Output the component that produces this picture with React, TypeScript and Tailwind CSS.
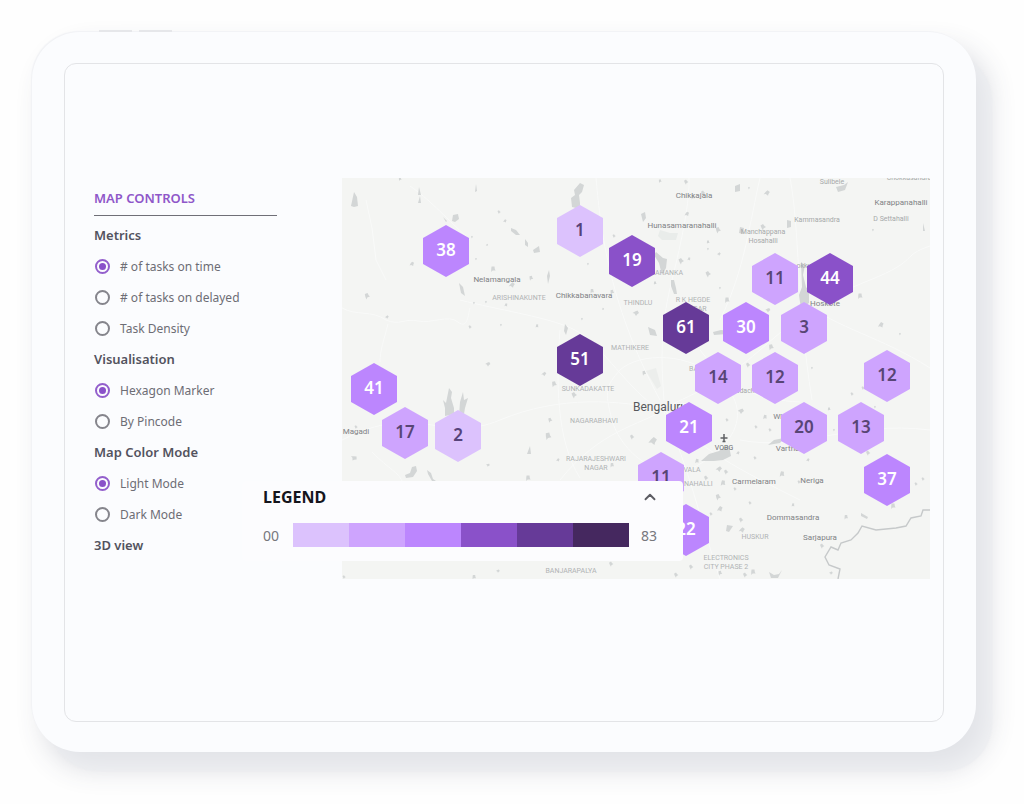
import React, { useState } from 'react';
import { ChevronUp } from 'lucide-react';

// Visible window of the map, in map units
const VIEW = { x: 342, y: 178, w: 588, h: 401 };

const place = (x: number, y: number): React.CSSProperties => ({
  left: `${((x - VIEW.x) / VIEW.w) * 100}%`,
  top: `${((y - VIEW.y) / VIEW.h) * 100}%`,
});

const LEVELS = {
  1: 'bg-[#dcc2fd] text-[#56437a]',
  2: 'bg-[#cea4fe] text-[#584575]',
  3: 'bg-[#bc86fe] text-white',
  4: 'bg-[#8a51c9] text-white',
  5: 'bg-[#663a98] text-white',
};

type Level = keyof typeof LEVELS;

const MARKERS: { x: number; y: number; count: number; level: Level }[] = [
  { x: 446, y: 251, count: 38, level: 3 },
  { x: 580, y: 231, count: 1, level: 1 },
  { x: 632, y: 261, count: 19, level: 4 },
  { x: 775, y: 279, count: 11, level: 2 },
  { x: 830, y: 279, count: 44, level: 4 },
  { x: 686, y: 328, count: 61, level: 5 },
  { x: 746, y: 328, count: 30, level: 3 },
  { x: 804, y: 328, count: 3, level: 2 },
  { x: 580, y: 360, count: 51, level: 5 },
  { x: 718, y: 378, count: 14, level: 2 },
  { x: 775, y: 378, count: 12, level: 2 },
  { x: 887, y: 376, count: 12, level: 2 },
  { x: 374, y: 389, count: 41, level: 3 },
  { x: 405, y: 433, count: 17, level: 2 },
  { x: 458, y: 436, count: 2, level: 1 },
  { x: 689, y: 428, count: 21, level: 3 },
  { x: 804, y: 428, count: 20, level: 2 },
  { x: 861, y: 428, count: 13, level: 2 },
  { x: 661, y: 478, count: 11, level: 2 },
  { x: 887, y: 480, count: 37, level: 3 },
  { x: 686, y: 530, count: 22, level: 3 },
];

const TOWN = 'text-[8px] text-[#7f8285]';
const VILLAGE = 'text-[7px] text-[#a6a9aa]';
const AREA = 'text-[7px] text-[#b0b3b4]';

const LABELS: { x: number; y: number; text: string; style: string }[] = [
  { x: 497, y: 280, text: 'Nelamangala', style: TOWN },
  { x: 519, y: 298, text: 'ARISHINAKUNTE', style: AREA },
  { x: 694, y: 196, text: 'Chikkajala', style: TOWN },
  { x: 682, y: 226, text: 'Hunasamaranahalli', style: TOWN },
  { x: 663, y: 273, text: 'YELAHANKA', style: AREA },
  { x: 584, y: 296, text: 'Chikkabanavara', style: TOWN },
  { x: 638, y: 303, text: 'THINDLU', style: AREA },
  { x: 693, y: 300, text: 'R K HEGDE', style: AREA },
  { x: 695, y: 309, text: 'NAGAR', style: AREA },
  { x: 630, y: 348, text: 'MATHIKERE', style: AREA },
  { x: 588, y: 389, text: 'SUNKADAKATTE', style: AREA },
  { x: 594, y: 421, text: 'NAGARABHAVI', style: AREA },
  { x: 596, y: 459, text: 'RAJARAJESHWARI', style: AREA },
  { x: 596, y: 468, text: 'NAGAR', style: AREA },
  { x: 660, y: 407, text: 'Bengaluru', style: 'text-[12px] text-[#57595d]' },
  { x: 709, y: 369, text: 'BANASWADI', style: AREA },
  { x: 724, y: 448, text: 'VOBG', style: 'text-[7px] text-[#6d6f72]' },
  { x: 692, y: 470, text: 'VALA', style: AREA },
  { x: 696, y: 484, text: 'ANAHALLI', style: AREA },
  { x: 754, y: 482, text: 'Carmelaram', style: TOWN },
  { x: 812, y: 481, text: 'Neriga', style: TOWN },
  { x: 793, y: 518, text: 'Dommasandra', style: TOWN },
  { x: 820, y: 538, text: 'Sarjapura', style: TOWN },
  { x: 755, y: 537, text: 'HUSKUR', style: AREA },
  { x: 726, y: 558, text: 'ELECTRONICS', style: AREA },
  { x: 726, y: 567, text: 'CITY PHASE 2', style: AREA },
  { x: 571, y: 571, text: 'BANJARAPALYA', style: AREA },
  { x: 356, y: 432, text: 'Magadi', style: TOWN },
  { x: 791, y: 417, text: 'Whitefield', style: TOWN },
  { x: 789, y: 449, text: 'Varthur', style: TOWN },
  { x: 825, y: 304, text: 'Hoskote', style: TOWN },
  { x: 804, y: 266, text: 'okku', style: VILLAGE },
  { x: 747, y: 391, text: 'adache', style: VILLAGE },
  { x: 763, y: 232, text: 'Manchappana', style: VILLAGE },
  { x: 763, y: 241, text: 'Hosahalli', style: VILLAGE },
  { x: 817, y: 220, text: 'Kammasandra', style: VILLAGE },
  { x: 891, y: 219, text: 'D Settahalli', style: VILLAGE },
  { x: 901, y: 203, text: 'Karappanahalli', style: TOWN },
  { x: 832, y: 182, text: 'Sulibele', style: VILLAGE },
  { x: 909, y: 178, text: 'Chokkasandra', style: VILLAGE },
];

// Lakes with a shape of their own
const LAKES = [
  'M580 183l4 2-2 7-3 3 1 8 0 6-8-2-1-9 4-3-1-5z',
  'M354 192l3 5 1 9-4 1-3-1z',
  'M641 214l4-2 1 6-3 4z',
  'M656 252l7 6 4 1-1 9-4 7-3-12-5-8z',
  'M801 262l4 3-2 10 3 12 3 4 0 12-8 6-2-14 3-8z',
  'M449 388l3 4-1 6 3 10 0 6-9 2 0-8-2-8 3 3z',
  'M463 392l1 8 4-2-3 10-1 6-5 2 1-14z',
  'M416 466l1 5-4 6-7 1-1-3 5-2 2-6z',
  'M427 470l4 3 2 6 3 2-4 0-4-7z',
  'M729 446l2 10-8 4-9 1-13 0 8-7 10-3 5-4z',
  'M784 438l-4 5-12 2 6-5z',
  'M671 280l3 0 2 8 1 6-3 0-3-8z',
  'M713 332l8-2 8 1-2 3-13 1z',
  'M648 327l7 3 2 6-7-1z',
  'M565 324l3 4-2 7-2-4z',
  'M549 270l1 6-2 8-1-8z',
  'M735 186l5-2 0 7-5 1z',
  'M740 227l4 1-1 6-4-1z',
  'M787 220l4 1 0 6-4 1z',
  'M836 187l8-2 4-3-3 8-7 2z',
  'M769 572l5 3 5-1 3-4-4 8-7 0z',
  'M511 228l5 2 4 5-4 0-5-4z',
  'M533 250l6-4 1 6-6 1z',
  'M525 239l3 4 0 4-3-2z',
  'M453 215l5-1 1 5-4 3-3-1z',
  'M443 217l4 4-1 1z',
  'M459 283l4 4 2 9-4-3z',
  'M476 184l1 7-2 1z',
  'M419 187l1 4 1 4-3 0z',
  'M420 196l1 7-3 0z',
  'M530 446l1 8-4 0z',
  'M727 525l6 1-4 6-3-1z',
  'M861 513l7 4-1 2-6-3z',
  'M923 223l2 8-2 0z',
];

// [x, y, size, rotation]
const PONDS: number[][] = [
  [400, 179, 3, 20], [412, 264, 4, 60], [367, 296, 5, 10], [387, 317, 3, 80], [472, 237, 2, 0],
  [476, 259, 2, 30], [487, 245, 2, 60], [493, 269, 5, 30], [499, 212, 3, 0], [505, 221, 3, 60],
  [531, 278, 4, 20], [512, 285, 5, 70], [474, 303, 2, 0], [486, 302, 2, 0], [506, 305, 3, 50],
  [470, 327, 3, 0], [501, 325, 2, 0], [537, 326, 3, 40], [488, 364, 4, 90], [354, 458, 5, 120],
  [356, 427, 3, 0], [488, 465, 3, 100], [528, 478, 5, 30], [544, 374, 4, 80], [554, 384, 5, 20],
  [550, 420, 4, 10], [548, 436, 6, 20], [558, 460, 3, 60], [588, 264, 2, 0], [592, 291, 4, 30],
  [614, 236, 3, 0], [603, 309, 2, 50], [636, 313, 5, 90], [582, 319, 2, 0], [612, 292, 4, 20],
  [660, 181, 3, 20], [686, 182, 4, 0], [687, 214, 4, 60], [693, 197, 4, 30], [703, 193, 4, 0],
  [655, 283, 3, 30], [681, 261, 5, 0], [689, 259, 3, 50], [708, 242, 3, 30],
  [708, 249, 2, 0], [719, 254, 3, 80], [718, 230, 5, 10], [708, 274, 5, 0], [720, 288, 2, 0],
  [727, 300, 5, 30], [767, 193, 5, 70], [763, 227, 5, 0], [749, 188, 2, 0], [873, 230, 2, 0],
  [860, 296, 5, 30], [881, 325, 5, 60], [900, 334, 2, 0], [771, 347, 5, 20], [748, 365, 4, 0],
  [768, 310, 4, 90], [758, 379, 3, 50], [741, 411, 5, 90],
  [756, 427, 3, 0], [765, 417, 4, 40], [770, 430, 3, 0], [852, 394, 3, 0],
  [863, 388, 3, 0], [875, 407, 2, 0], [829, 409, 3, 30], [834, 430, 2, 0],
  [808, 460, 3, 60], [782, 474, 5, 40], [799, 482, 3, 0], [755, 458, 3, 0], [750, 503, 3, 0],
  [741, 520, 4, 0], [793, 505, 3, 40], [719, 469, 5, 80], [723, 483, 5, 40], [718, 497, 5, 10],
  [726, 472, 4, 0], [711, 514, 3, 0], [720, 509, 5, 60], [735, 489, 3, 0], [727, 420, 3, 0],
  [697, 461, 4, 40], [706, 478, 4, 0], [738, 453, 3, 60], [842, 429, 3, 0],
  [822, 546, 4, 0], [868, 453, 4, 0], [893, 506, 5, 30], [846, 517, 4, 30], [923, 479, 3, 0],
  [916, 484, 3, 0], [831, 573, 3, 90], [745, 575, 4, 0], [753, 572, 5, 30],
  [676, 575, 4, 0], [691, 567, 4, 0], [720, 573, 4, 20], [611, 564, 4, 0],
  [474, 577, 4, 30], [344, 577, 3, 0], [498, 571, 3, 90], [612, 465, 4, 30],
  [632, 437, 4, 0], [653, 441, 7, 70], [644, 373, 4, 20], [574, 395, 5, 0],
  [812, 368, 2, 0], [742, 530, 5, 70],
];

const ROADS = [
  'M410 186C430 200 440 212 470 240',
  'M342 308C356 316 372 310 386 320C400 326 404 318 418 321S448 314 458 322S468 314 470 308',
  'M388 324C384 340 380 350 380 362',
  'M366 200L372 228L376 260L386 280',
  'M460 300C500 310 540 316 566 326S600 352 632 386S660 400 690 404',
  'M689 178C690 200 682 240 672 280S660 350 664 400',
  'M660 410C690 395 720 385 760 350S820 300 870 280S900 256 930 246',
  'M800 300C840 330 880 336 930 368',
  'M664 410C640 425 600 430 560 480',
  'M664 410C700 450 740 470 800 500',
  'M664 412C690 470 700 520 720 579',
  'M664 410C620 400 560 395 500 420S420 400 342 440',
  'M596 178C600 220 606 300 660 400',
  'M560 330C556 380 556 440 580 478',
  'M620 370C640 352 690 352 720 380S740 440 700 464S620 450 612 420S606 386 620 370',
  'M700 350C730 390 760 400 800 402',
  'M790 178C800 230 796 300 812 400',
  'M372 452C390 470 398 472 402 481',
  'M760 178C750 220 745 270 720 320',
  'M740 440C800 452 850 420 930 430',
];

const Terrain: React.FC = () => (
  <svg
    className="block h-full w-full"
    viewBox="342 178 588 401"
    preserveAspectRatio="none"
    aria-hidden="true"
  >
    <rect x="342" y="178" width="588" height="401" fill="#f4f5f3" />
    <g fill="none" stroke="#f9faf9" strokeWidth="1">
      {ROADS.map((d) => (
        <path key={d} d={d} />
      ))}
    </g>
    <path d="M646 371l10-3 5 18-4 3z" fill="#eceeec" />
    <path d="M660 230l10 3 8 0-2 7-14 0-4-4z" fill="#e9ecea" />
    <g fill="#d3d6d6">
      {LAKES.map((d) => (
        <path key={d} d={d} />
      ))}
      {PONDS.map(([x, y, size, turn]) => (
        <path
          key={`${x}-${y}`}
          d="M-.5-.3L0-.6L.3-.2L.6 0L.1.3L0 .7L-.3.2Z"
          transform={`translate(${x} ${y}) rotate(${turn}) scale(${size})`}
        />
      ))}
    </g>
    {/* state border */}
    <path
      d="M930 510H923L921 516L911 518L906 526L896 528L876 530L862 526L858 533L851 540L841 543L838 550L831 547L825 557L829 565L840 569L838 579"
      fill="none"
      stroke="#c6c9ca"
      strokeWidth="1.4"
    />
    {/* airport */}
    <path d="M724 434v8M720.5 438h7M722.5 441.5h3" fill="none" stroke="#5f6164" strokeWidth="1.5" />
  </svg>
);

const HexMarker: React.FC<{ count: number; level: Level }> = ({ count, level }) => (
  <div
    className={`flex h-[52px] w-[46px] items-center justify-center pb-[3px] text-[17px] leading-none font-semibold [clip-path:polygon(50%_0,100%_25%,100%_75%,50%_100%,0_75%,0_25%)] ${LEVELS[level]}`}
  >
    {count}
  </div>
);

const SCALE = [
  'bg-[#dcc2fd]',
  'bg-[#cea4fe]',
  'bg-[#bc86fe]',
  'bg-[#8a51c9]',
  'bg-[#663a98]',
  'bg-[#45285f]',
];

const Legend: React.FC = () => {
  const [open, setOpen] = useState(true);

  return (
    <section className="rounded-sm bg-[#fcfcfe] pr-6 pb-1 pl-[21px]">
      <div className="flex h-8 items-center justify-between">
        <h2 className="text-[16px] leading-6 font-bold text-[#15151c]">LEGEND</h2>
        <button type="button" aria-label="Toggle legend" onClick={() => setOpen(!open)}>
          <ChevronUp className="size-[18px] text-[#5c5c63]" strokeWidth={2.5} />
        </button>
      </div>
      {open && (
        <div className="flex h-11 items-center text-[14px] text-[#77777d]">
          <span className="w-[30px]">00</span>
          <div className="flex h-6 flex-1">
            {SCALE.map((color) => (
              <div key={color} className={`flex-1 ${color}`} />
            ))}
          </div>
          <span className="w-[30px] pl-3">83</span>
        </div>
      )}
    </section>
  );
};

interface OptionGroupProps {
  title: string;
  name: string;
  options: string[];
}

const OptionGroup: React.FC<OptionGroupProps> = ({ title, name, options }) => (
  <fieldset>
    <legend className="flex h-[31px] items-center text-[13px] font-semibold text-[#53535e]">
      {title}
    </legend>
    {options.map((option, index) => (
      <label
        key={option}
        className="flex h-[31px] items-center gap-[10px] pl-px text-[12px] text-[#6d6d75]"
      >
        <input
          type="radio"
          name={name}
          defaultChecked={index === 0}
          className="size-[15px] appearance-none rounded-full border-2 border-[#85858c] bg-clip-content p-[2px] checked:border-[#935fcc] checked:bg-[#8a51c9]"
        />
        {option}
      </label>
    ))}
  </fieldset>
);

const MapControls: React.FC = () => (
  <aside className="w-[183px] shrink-0 pt-1">
    <h1 className="mb-1 flex h-[34px] items-center border-b border-[#6f6f77] text-[13px] font-semibold text-[#8f57c9]">
      MAP CONTROLS
    </h1>
    <OptionGroup
      title="Metrics"
      name="metrics"
      options={['# of tasks on time', '# of tasks on delayed', 'Task Density']}
    />
    <OptionGroup
      title="Visualisation"
      name="visualisation"
      options={['Hexagon Marker', 'By Pincode']}
    />
    <OptionGroup title="Map Color Mode" name="mode" options={['Light Mode', 'Dark Mode']} />
    <h2 className="flex h-[31px] items-center text-[13px] font-semibold text-[#53535e]">3D view</h2>
  </aside>
);

const HexMap: React.FC = () => (
  <div className="relative h-[401px] min-w-0 flex-1">
    <div className="relative h-full overflow-hidden">
      <Terrain />
      {LABELS.map(({ x, y, text, style }) => (
        <span
          key={`${x}-${y}`}
          className={`absolute -translate-x-1/2 -translate-y-1/2 font-['Roboto',sans-serif] leading-none whitespace-nowrap ${style}`}
          style={place(x, y)}
        >
          {text}
        </span>
      ))}
      {MARKERS.map(({ x, y, count, level }) => (
        <div
          key={`${x}-${y}`}
          className="absolute -translate-x-1/2 -translate-y-1/2"
          style={place(x, y)}
        >
          <HexMarker count={count} level={level} />
        </div>
      ))}
    </div>
    <div className="absolute top-[303px] -left-[100px] w-[441px]">
      <Legend />
    </div>
  </div>
);

export default function App() {
  return (
    <div className="min-h-screen bg-[#fefefe] pt-8 pr-12 pb-[52px] pl-8 font-['Noto_Sans',sans-serif]">
      <div className="relative rounded-[48px] bg-[#fbfcfe] px-8 pt-[31px] pb-[30px] shadow-[-1px_-1px_1px_#f1f2f5,17px_20px_1px_-1px_#e9ebef80,12px_16px_28px_#3b405a30]">
        <div className="absolute -top-[2px] left-[67px] flex gap-[7px]">
          <span className="h-[2px] w-[33px] bg-[#e6e7ea]" />
          <span className="h-[2px] w-[33px] bg-[#e6e7ea]" />
        </div>
        <main className="flex gap-[65px] rounded-xl border border-[#e3e4e7] pt-[114px] pr-[13px] pb-[142px] pl-[29px]">
          <MapControls />
          <HexMap />
        </main>
      </div>
    </div>
  );
}
